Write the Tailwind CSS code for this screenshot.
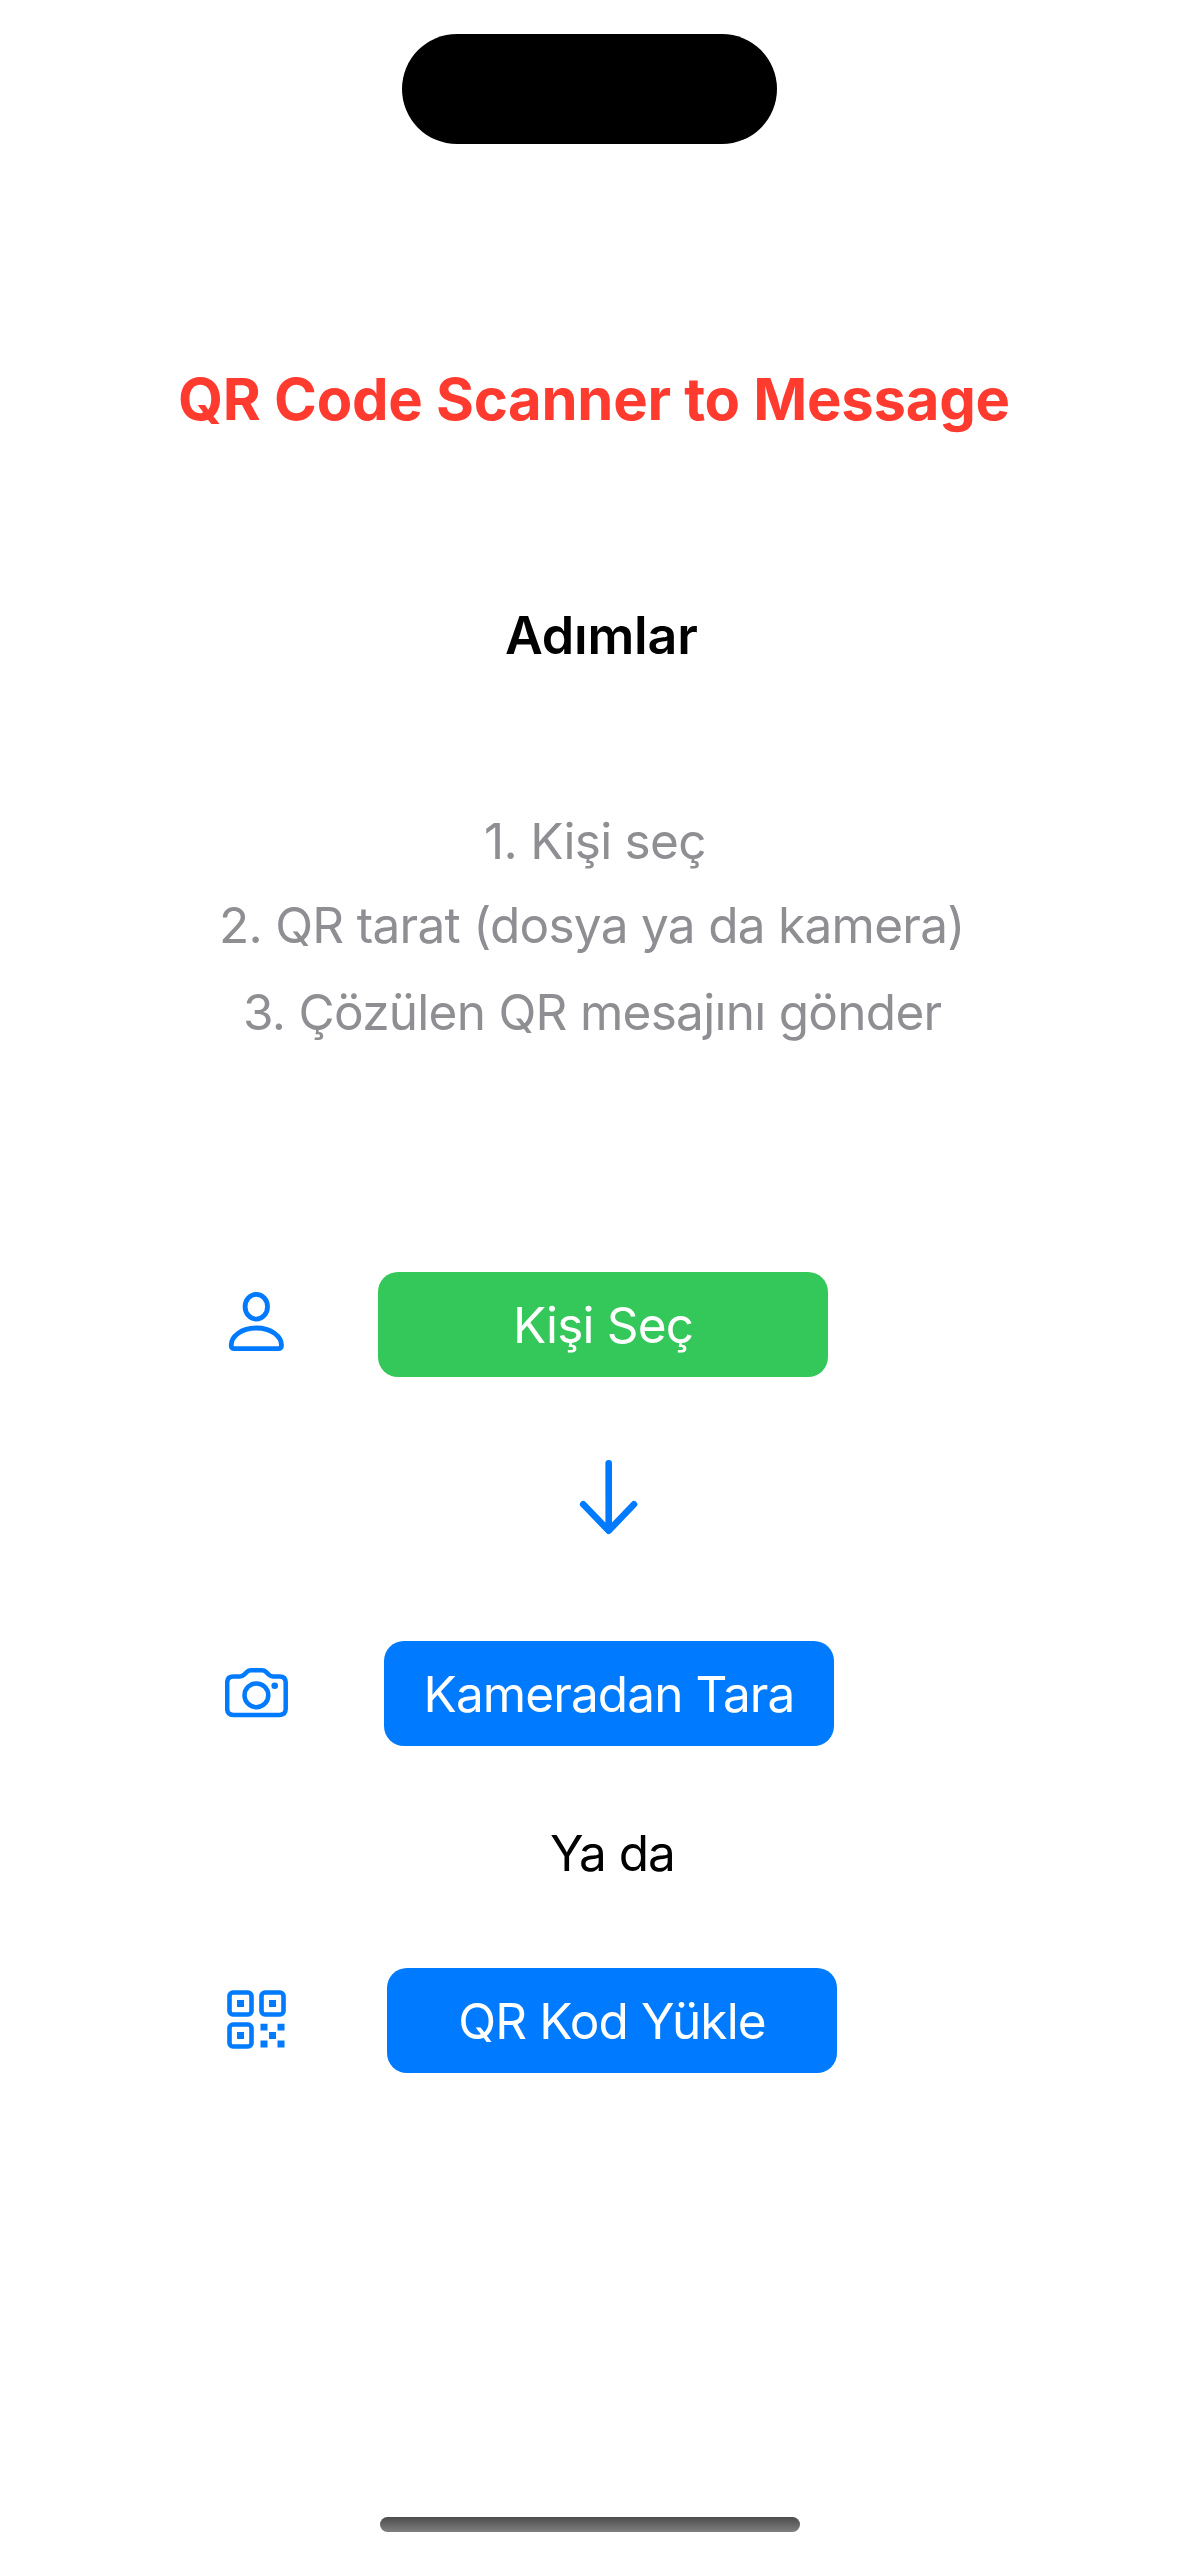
<!DOCTYPE html>
<html lang="tr">
<head>
<meta charset="utf-8">
<title>QR Code Scanner to Message</title>
<script src="https://cdn.jsdelivr.net/npm/@tailwindcss/browser@4"></script>
</head>
<body class="bg-white">
<main class="flex h-[2556px] w-[1179px] flex-col overflow-hidden bg-white font-['Inter',sans-serif] text-[49.5px] leading-[60px] whitespace-nowrap text-black">
  <div class="mx-auto mt-[34px] h-[110px] w-[375px] shrink-0 rounded-full bg-black"></div>

  <h1 class="mt-[225px] pl-[178px] text-[58px] leading-[60px] font-bold tracking-[-0.28px] text-[#ff3b30]">QR Code Scanner to Message</h1>
  <h2 class="mt-[177px] pl-[505px] text-[52px] leading-[60px] font-semibold tracking-[-0.2px]">Adımlar</h2>

  <div class="mt-[145px] flex flex-col tracking-[-0.72px] text-[#8e8e93]">
    <p class="pl-[484px]">1. Kişi seç</p>
    <p class="mt-[24px] pl-[219px]">2. QR tarat (dosya ya da kamera)</p>
    <p class="mt-[27px] pl-[243px]">3. Çözülen QR mesajını gönder</p>
  </div>

  <div class="mt-[230px] flex h-[105px] items-center pl-[225px]">
    <svg class="mb-[8px] h-[61px] w-[63px]" viewBox="0 0 63 61" fill="none" stroke="#007aff" stroke-width="4.8">
      <ellipse cx="31.3" cy="16.7" rx="11.2" ry="12.4"/>
      <path d="M9.5 58.6h43.6q3.4 0 3.4-3.4C56.5 46.5 46.5 38 31.3 38S6.200 46.500 6.200 55.200q0 3.400 3.300 3.400Z"/>
    </svg>
    <button class="ml-[90px] h-[105px] w-[450px] rounded-[20px] bg-[#34c759] tracking-[-0.85px] text-white">Kişi Seç</button>
  </div>

  <svg class="mt-[81px] ml-[578px] h-[78px] w-[62px] shrink-0" viewBox="0 0 62 78" fill="none" stroke="#007aff" stroke-width="6.6" stroke-linecap="round" stroke-linejoin="round">
    <path d="M30.700 5.300V72.500M5.200 46.300 30.700 72.700 56 46.300"/>
  </svg>

  <div class="mt-[105px] flex h-[105px] items-center pl-[225px]">
    <svg class="h-[51px] w-[63px]" viewBox="0 0 63 51" fill="none" stroke="#007aff" stroke-width="4.500">
      <path d="M8.300 8.400H15q2.400 0 4.200-1.800L22 3.900q1.600-1.600 4-1.600h11q2.400 0 4 1.600l2.800 2.700q1.800 1.800 4.200 1.800h6.600q6.100 0 6.100 6.100v26.300q0 6.100-6.100 6.100H8.300q-6.100 0-6.100-6.100V14.500q0-6.100 6.100-6.100Z"/>
      <circle cx="31.400" cy="27.300" r="11.900"/>
      <circle cx="49.700" cy="17.700" r="3.300" fill="#007aff" stroke="none"/>
    </svg>
    <button class="ml-[96px] h-[105px] w-[450px] rounded-[20px] bg-[#007aff] tracking-[-0.9px] text-white">Kameradan Tara</button>
  </div>

  <p class="mt-[77px] pl-[550px] tracking-[-1px]">Ya da</p>

  <div class="mt-[85px] flex h-[105px] items-center pl-[225px]">
    <svg class="h-[61px] w-[63px]" viewBox="0 0 63 61" fill="#007aff">
      <g fill="none" stroke="#007aff" stroke-width="4.600">
        <rect x="4.500" y="2.500" width="22" height="22" rx="3.500"/>
        <rect x="36.500" y="2.500" width="22" height="22" rx="3.500"/>
        <rect x="4.500" y="34.500" width="22" height="22" rx="3.500"/>
      </g>
      <path d="M12 10h7v7h-7zM44 10h7v7h-7zM12 42h7v7h-7zM35.500 33.800h7v6.700h-7zM52.500 33.800h7v6.700h-7zM44 42h7v7h-7zM35.500 50.500h7v7h-7zM52.500 50.500h7v7h-7z"/>
    </svg>
    <button class="ml-[99px] h-[105px] w-[450px] rounded-[20px] bg-[#007aff] tracking-[-0.85px] text-white">QR Kod Yükle</button>
  </div>

  <div class="mt-auto mb-[24px] ml-[380px] h-[15px] w-[420px] shrink-0 rounded-full bg-linear-to-b from-[#4c4c4c] to-[#808080]"></div>
</main>
</body>
</html>
